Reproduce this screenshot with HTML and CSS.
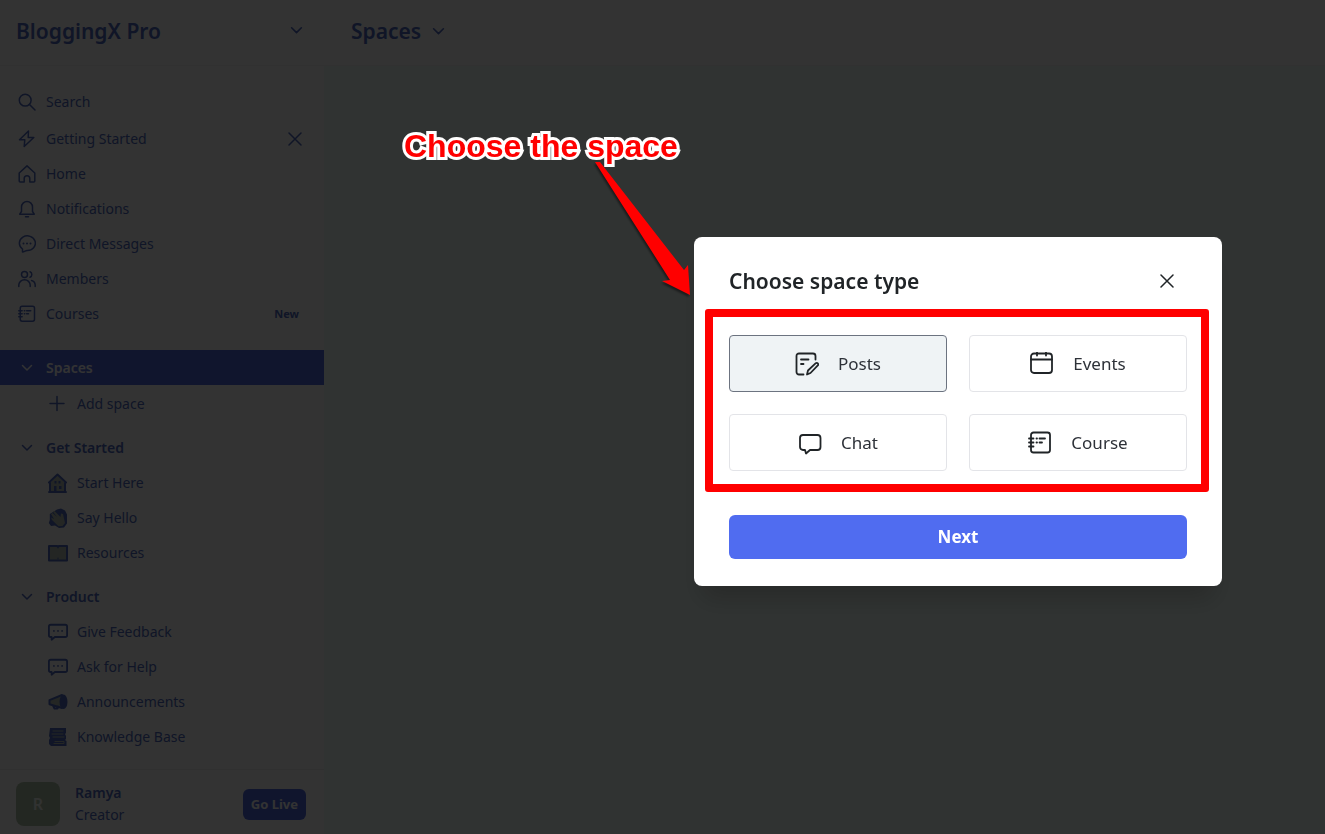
FILE: index.html
```
<!DOCTYPE html>
<html lang="en">
<head>
    <meta charset="UTF-8">
    <meta name="viewport" content="width=device-width, initial-scale=1">
    <title>Spaces - BloggingX Pro</title>
    <link rel="stylesheet" href="styles.css">
</head>
<body>

<!-- shared icons -->
<svg class="sprite" aria-hidden="true">
    <symbol id="chevron" viewBox="0 0 12 12"><path d="M1.5 3.5 6 8l4.500-4.500"/></symbol>
    <symbol id="close" viewBox="0 0 14 14"><path d="M1 1l12 12M13 1 1 13"/></symbol>
    <symbol id="course" viewBox="0 0 24 24">
        <rect x="3" y="1.500" width="19" height="20" rx="2.500"/>
        <path d="M1 7.500h4.500M1 11.500h4.500M1 15.500h4.500M8.500 7.500h.5M11.500 7.500H17M8.500 11.500h.5M11.500 11.500H14"/>
    </symbol>
    <symbol id="talk" viewBox="0 0 22 20">
        <path d="M3 2h16a2 2 0 0 1 2 2v9.500a2 2 0 0 1-2 2H7.500L4 18.500v-3H3a2 2 0 0 1-2-2V4a2 2 0 0 1 2-2z"/>
        <path class="dots" d="M6.500 8.800h.01M11 8.800h.01M15.500 8.800h.01"/>
    </symbol>
</svg>

<div class="app">
    <aside class="sidebar">
        <button type="button" class="brand">
            <span>BloggingX Pro</span>
            <svg class="icon chevron"><use href="#chevron"/></svg>
        </button>

        <nav class="nav">
            <a href="#" class="row search">
                <svg class="icon" viewBox="0 0 18 18"><circle cx="7.200" cy="7.200" r="5.900"/><path d="m11.500 11.500 5.500 5.500"/></svg>
                <span>Search</span>
            </a>
            <div class="row">
                <a href="#" class="row-link">
                    <svg class="icon" viewBox="0 0 18 18"><path d="M10.500 1 1.500 9.800h5.300L6.200 16.500l9.600-9h-5.600z"/></svg>
                    <span>Getting Started</span>
                </a>
                <button type="button" class="dismiss" aria-label="Dismiss"><svg class="icon"><use href="#close"/></svg></button>
            </div>
            <a href="#" class="row">
                <svg class="icon" viewBox="0 0 18 18"><path d="M1.200 8 9 .9 16.800 8v8a1 1 0 0 1-1 1h-4v-3.500a2.800 2.800 0 0 0-5.600 0V17h-4a1 1 0 0 1-1-1z"/></svg>
                <span>Home</span>
            </a>
            <a href="#" class="row">
                <svg class="icon" viewBox="0 0 18 18"><path d="M3.500 7a5.500 5.500 0 0 1 11 0v4.500l1.800 2.700H1.700l1.800-2.700zM7.500 16.800h3"/></svg>
                <span>Notifications</span>
            </a>
            <a href="#" class="row">
                <svg class="icon" viewBox="0 0 18 18"><path d="M4.500 17v-3a8 7.300 0 1 1 4.500 1.500c-1.500 0-2.500 1.500-4.500 1.500z"/><path class="dots" d="M5.500 8.500h.01M9 8.500h.01M12.500 8.500h.01"/></svg>
                <span>Direct Messages</span>
            </a>
            <a href="#" class="row">
                <svg class="icon" viewBox="0 0 18 18"><circle cx="6.500" cy="4.500" r="3"/><path d="M.8 16.500v-1.500a5.700 5.200 0 0 1 11.400 0v1.500M12 1.800a2.900 2.900 0 0 1 0 5.400M13.500 10.500a5 5 0 0 1 3.700 4.500v1.500"/></svg>
                <span>Members</span>
            </a>
            <a href="#" class="row">
                <svg class="icon heavy"><use href="#course"/></svg>
                <span>Courses</span>
                <span class="tag">New</span>
            </a>

            <section class="group first">
                <button type="button" class="row heading active"><svg class="icon"><use href="#chevron"/></svg><span>Spaces</span></button>
                <a href="#" class="row sub">
                    <svg class="icon" viewBox="0 0 20 20"><path d="M9 2.500v14M2 9.500h14"/></svg>
                    <span>Add space</span>
                </a>
            </section>

            <section class="group">
                <button type="button" class="row heading"><svg class="icon"><use href="#chevron"/></svg><span>Get Started</span></button>
                <a href="#" class="row sub">
                    <svg class="icon pic" viewBox="0 0 20 20">
                        <path class="leaf" d="M2 10 9.500 2l7.500 8v9H2z"/>
                        <path class="line" d="M1 9.500 9.500 1.500 18 9.500M2 10v9M17 10v9M1 19h17"/>
                        <path class="ink" d="M6 13h2.500v6H6zM6.500 8h2v2.500h-2zM10.500 8h2v2.500h-2zM11 13h2.500v3H11z"/>
                    </svg>
                    <span>Start Here</span>
                </a>
                <a href="#" class="row sub">
                    <svg class="icon pic" viewBox="0 0 20 20">
                        <path class="ink" d="M9 1.500 13 .5l4 2 2 4v9l-3 4-5 .5-4-2.500-4 .5L.8 15l1-3V6z"/>
                        <path class="leaf" d="m3 6 1.500-1L9 9 5 3.800 6.500 3l6 6 .5-3.500 2 .5 2 9-2.500 3-4 .2L4 12l-1-2.500L6 11z"/>
                    </svg>
                    <span>Say Hello</span>
                </a>
                <a href="#" class="row sub">
                    <svg class="icon pic" viewBox="0 0 20 20">
                        <rect class="leaf" x="1" y="3" width="18" height="14"/>
                        <path class="line" d="M1 3h8l1 .8 1-.8h8v14.500H1z"/>
                        <path class="fine" d="M10 4v1M10 15v1"/>
                    </svg>
                    <span>Resources</span>
                </a>
            </section>

            <section class="group">
                <button type="button" class="row heading"><svg class="icon"><use href="#chevron"/></svg><span>Product</span></button>
                <a href="#" class="row sub">
                    <svg class="icon talk"><use href="#talk"/></svg>
                    <span>Give Feedback</span>
                </a>
                <a href="#" class="row sub">
                    <svg class="icon talk"><use href="#talk"/></svg>
                    <span>Ask for Help</span>
                </a>
                <a href="#" class="row sub">
                    <svg class="icon pic" viewBox="0 0 20 20">
                        <path class="leaf" d="M1 8.500 14 3v13L2 12.500z"/>
                        <path class="line" d="M14 3 1.500 8.200v4L14 16M5 13.500l1.500 3h3l.5-2"/>
                        <ellipse class="ink" cx="15.500" cy="9.800" rx="4" ry="7.300"/>
                    </svg>
                    <span>Announcements</span>
                </a>
                <a href="#" class="row sub">
                    <svg class="icon pic" viewBox="0 0 20 20">
                        <path class="ink" d="M2 1h16v5l-1 1 1 2v3l-1 1 1.500 1v5H3l-2-2v-4l1-2-1-2z"/>
                        <path class="fine pale" d="M5 4h10M4 7h11M5 10h11M7 14.500h9v2H6"/>
                    </svg>
                    <span>Knowledge Base</span>
                </a>
            </section>
        </nav>

        <footer class="account">
            <span class="avatar">R</span>
            <div class="who">
                <strong>Ramya</strong>
                <span>Creator</span>
            </div>
            <button type="button" class="live">Go Live</button>
        </footer>
    </aside>

    <main class="main">
        <header class="topbar">
            <button type="button" class="title"><span>Spaces</span><svg class="icon chevron"><use href="#chevron"/></svg></button>
        </header>
    </main>
</div>

<div class="overlay">
    <form class="modal" role="dialog" aria-labelledby="modal-title">
        <header class="modal-head">
            <h2 id="modal-title">Choose space type</h2>
            <button type="button" class="modal-close" aria-label="Close"><svg class="icon"><use href="#close"/></svg></button>
        </header>

        <div class="options" role="radiogroup" aria-labelledby="modal-title">
            <label class="option">
                <input type="radio" name="type" value="posts" checked>
                <svg class="icon" viewBox="0 0 24 24">
                    <path d="M8.500 22.500H4A2.500 2.500 0 0 1 1.500 20V4A2.500 2.500 0 0 1 4 1.500h14A2.500 2.500 0 0 1 20.500 4v3.500M6 7.500h7.500M6 12h2.500"/>
                    <path d="m12 22.500 1-4 7.800-7.300a1.500 1.500 0 0 1 2 2.200L15.500 21z"/>
                </svg>
                <span>Posts</span>
            </label>
            <label class="option">
                <input type="radio" name="type" value="events">
                <svg class="icon" viewBox="0 0 24 24"><rect x="1" y="1.500" width="21" height="19.500" rx="3"/><path d="M1 7.500h21M7 0v3.500M16 0v3.500"/></svg>
                <span>Events</span>
            </label>
            <label class="option">
                <input type="radio" name="type" value="chat">
                <svg class="icon" viewBox="0 0 24 24"><path d="M5 4h14.500a3 3 0 0 1 3 3v9a3 3 0 0 1-3 3H12l-4 3.500L7 19H5a3 3 0 0 1-3-3V7a3 3 0 0 1 3-3z"/></svg>
                <span>Chat</span>
            </label>
            <label class="option">
                <input type="radio" name="type" value="course">
                <svg class="icon"><use href="#course"/></svg>
                <span>Course</span>
            </label>
            <div class="marker"></div>
        </div>

        <button type="button" class="next">Next</button>

        <!-- callout pointing at the dialog -->
        <div class="callout">Choose the space</div>
        <svg class="arrow" viewBox="0 0 100 140" aria-hidden="true"><path d="M5 2h5l84 108 4-5 2 30-28-14 8-1z"/></svg>
    </form>
</div>

</body>
</html>
```
FILE: styles.css
```
* {
    box-sizing: border-box;
}

body {
    margin: 0;
    font-family: "Noto Sans", "Open Sans", sans-serif;
    font-size: 14px;
    line-height: 20px;
    color: #506cc0;
    background: #fff;
}

a {
    color: inherit;
    text-decoration: none;
}

button {
    padding: 0;
    border: 0;
    font: inherit;
    color: inherit;
    background: none;
    cursor: pointer;
}

.sprite {
    display: none;
}

.icon {
    flex: none;
    width: 18px;
    height: 18px;
    fill: none;
    stroke: currentColor;
    stroke-width: 1.5;
    stroke-linecap: round;
    stroke-linejoin: round;
}

.dots {
    stroke-width: 2;
}

.icon.chevron {
    width: 13px;
    height: 13px;
}

.app {
    display: flex;
    min-height: 100vh;
}

/* sidebar */
.sidebar {
    display: flex;
    flex-direction: column;
    flex: none;
    width: 324px;
}

.brand {
    display: flex;
    align-items: center;
    justify-content: space-between;
    height: 66px;
    padding: 0 21px 4px 16px;
    border-bottom: 1px solid #f5f5f5;
    font-size: 21px;
    font-weight: 600;
}

.nav {
    flex: 1;
    padding-top: 18px;
}

.row {
    display: flex;
    align-items: center;
    gap: 10px;
    width: 100%;
    height: 35px;
    padding: 0 22px 0 18px;
}

.search {
    margin-bottom: 2px;
}

.row-link {
    display: flex;
    flex: 1;
    align-items: center;
    gap: 10px;
}

.dismiss {
    display: flex;
}

.dismiss .icon {
    width: 14px;
    height: 14px;
}

.icon.heavy {
    stroke-width: 2;
}

.tag {
    margin-left: auto;
    padding: 0 3px;
    font-size: 11px;
    font-weight: 700;
}

.group {
    margin-top: 9px;
}

.group.first {
    margin-top: 19px;
}

.heading {
    font-weight: 600;
    text-align: left;
}

.heading .icon {
    height: 12px;
}

.active {
    color: #fff;
    background: #506be0;
}

.sub {
    padding-left: 48px;
}

.active + .sub {
    margin-top: 1px;
}

.sub .icon {
    width: 20px;
    height: 20px;
}

.sub span {
    margin-left: -1px;
}

.icon.talk {
    stroke-width: 2;
}

.pic .leaf {
    fill: #b4beb4;
    stroke: none;
}

.pic .ink {
    fill: currentColor;
    stroke: none;
}

.pic .line {
    stroke-width: 2;
}

.pic .fine {
    stroke-width: 1;
}

.pic .pale {
    stroke: #b4beb4;
}

.account {
    display: flex;
    align-items: center;
    gap: 15px;
    height: 65px;
    padding: 4px 18px 0 16px;
    border-top: 1px solid #f0f0f0;
}

.avatar {
    width: 44px;
    height: 44px;
    border-radius: 8px;
    font-size: 16px;
    font-weight: 600;
    line-height: 44px;
    text-align: center;
    color: #f5faf5;
    background: #afc3aa;
}

.who {
    display: flex;
    flex: 1;
    flex-direction: column;
    line-height: 22px;
}

.who strong {
    font-weight: 600;
}

.live {
    padding: 0 8px;
    border-radius: 6px;
    font-size: 13px;
    font-weight: 700;
    line-height: 31px;
    color: #fff;
    background: #506be0;
}

/* main column */
.main {
    flex: 1;
    background: #f0fffa;
}

.topbar {
    height: 66px;
    padding: 0 27px;
    border-bottom: 1px solid #f5f5f5;
    background: #fff;
}

.title {
    display: flex;
    align-items: center;
    gap: 11px;
    height: 62px;
    font-size: 21px;
    font-weight: 600;
}

/* dialog */
.overlay {
    position: fixed;
    inset: 0;
    display: flex;
    align-items: center;
    justify-content: flex-end;
    padding: 0 103px 11px 0;
    background: rgba(0, 0, 0, .8);
}

.modal {
    position: relative;
    width: 528px;
    padding: 28px 35px 27px;
    border-radius: 8px;
    color: #2d3138;
    background: #fff;
    box-shadow: 0 20px 24px -8px rgba(0, 0, 0, .2);
}

.modal-head {
    display: flex;
    align-items: center;
    justify-content: space-between;
    height: 32px;
    margin-bottom: 38px;
    padding-right: 13px;
    color: #202427;
}

.modal-head h2 {
    margin: 0;
    font-size: 21px;
    font-weight: 600;
}

.modal-close {
    display: flex;
}

.modal-close .icon {
    width: 14px;
    height: 14px;
}

.options {
    position: relative;
    display: grid;
    grid-template-columns: 1fr 1fr;
    gap: 22px;
    margin-bottom: 44px;
}

.option {
    position: relative;
    display: flex;
    align-items: center;
    justify-content: center;
    gap: 19px;
    height: 57px;
    border: 1px solid #e3e4e8;
    border-radius: 4px;
    font-size: 17px;
    cursor: pointer;
}

.option input {
    position: absolute;
    inset: 0;
    width: 100%;
    height: 100%;
    margin: 0;
    opacity: 0;
    cursor: pointer;
}

.option:has(input:checked) {
    border-color: #6c7380;
    background: #eff3f5;
}

.option .icon {
    width: 24px;
    height: 24px;
    color: #202427;
    stroke-width: 1.8;
}

.next {
    display: block;
    width: 100%;
    height: 44px;
    border-radius: 6px;
    font-size: 17px;
    font-weight: 700;
    color: #fff;
    background: #506cf0;
}

/* red annotations */
.marker {
    position: absolute;
    inset: -26px -22px -21px -24px;
    border: 8px solid #f00;
    border-radius: 3px;
    pointer-events: none;
}

.callout {
    position: absolute;
    top: -109px;
    left: -290px;
    font: bold 32px/36px "Liberation Sans", Arial, sans-serif;
    white-space: nowrap;
    color: #f00;
    -webkit-text-stroke: 6px #fff;
    paint-order: stroke fill;
}

.arrow {
    position: absolute;
    top: -77px;
    left: -104px;
    width: 100px;
    height: 140px;
    fill: #f00;
    filter: drop-shadow(-1px 2px 1px rgba(0, 0, 0, .5));
}
```
